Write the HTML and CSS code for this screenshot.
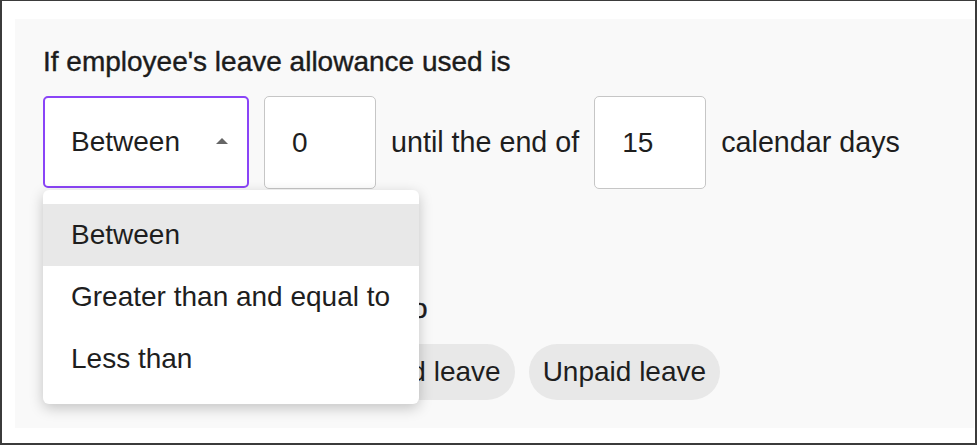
FILE: index.html
```html
<!DOCTYPE html>
<html lang="en">
<head>
    <meta charset="UTF-8">
    <meta name="viewport" content="width=device-width, initial-scale=1.0">
    <title>Leave rule</title>
    <link rel="stylesheet" href="styles.css">
  </head>
  <body>
    <div class="frame">
      <div class="panel">
        <h2 class="rule-title">If employee's leave allowance used is</h2>

        <div class="rule-row">
          <div class="select-wrap">
            <div class="select is-open">
              <span>Between</span>
              <span class="caret"></span>
            </div>
            <ul class="menu">
              <li class="menu-item selected">Between</li>
              <li class="menu-item">Greater than and equal to</li>
              <li class="menu-item">Less than</li>
            </ul>
          </div>
          <div class="num-box">0</div>
          <span class="rule-text">until the end of</span>
          <div class="num-box">15</div>
          <span class="rule-text">calendar days</span>
        </div>

        <h2 class="rule-title second">Leave types this rule applies to</h2>
        <div class="chips">
          <span class="chip">Annual leave</span>
          <span class="chip">Parental paid leave</span>
          <span class="chip">Unpaid leave</span>
        </div>
      </div>
    </div>
  </body>
</html>
```

FILE: styles.css
```css
  body {
    margin: 0;
    background: #fff;
    font-family: 'Liberation Sans', Arial, sans-serif;
    color: #1e1e1e;
  }

  .frame {
    width: 977px;
    height: 445px;
    box-sizing: border-box;
    border: 2px solid #3b3b3b;
    border-top-width: 1px;
    padding: 18px 1px 15px 13px;
    display: flex;
    flex-direction: column;
  }

  .panel {
    flex: 1;
    background: #f9f9f9;
    padding: 26px 28px 0 28px;
  }

  .rule-title {
    margin: 0;
    font-size: 28px;
    line-height: 34px;
    font-weight: normal;
    color: #1c1c1c;
    -webkit-text-stroke: 0.4px #1c1c1c;
  }

  .rule-title.second {
    margin-top: 103px;
  }

  .rule-row {
    margin-top: 17px;
    height: 93px;
    display: flex;
    align-items: center;
    gap: 15px;
    font-size: 28px;
  }

  .rule-text {
    white-space: nowrap;
    font-size: 28.7px;
  }

  .select-wrap {
    position: relative;
    height: 100%;
  }

  .select {
    width: 206px;
    height: 92px;
    box-sizing: border-box;
    background: #fff;
    border: 1px solid #c6c6c6;
    border-radius: 5px;
    padding: 0 19px 0 27px;
    display: flex;
    align-items: center;
    justify-content: space-between;
  }

  .select.is-open {
    border: 2px solid #8a44f7;
    padding-left: 26px;
  }

  .caret {
    width: 0;
    height: 0;
    border-left: 6px solid transparent;
    border-right: 6px solid transparent;
    border-bottom: 6px solid #666;
    margin-top: -2px;
  }

  .num-box {
    width: 112px;
    height: 93px;
    box-sizing: border-box;
    background: #fff;
    border: 1px solid #c6c6c6;
    border-radius: 5px;
    padding-left: 27px;
    display: flex;
    align-items: center;
  }

  .menu {
    position: absolute;
    top: 94px;
    left: 0;
    z-index: 10;
    width: 376px;
    margin: 0;
    padding: 14px 0;
    list-style: none;
    background: #fff;
    border-radius: 6px;
    box-shadow: 0 4px 14px rgba(0, 0, 0, 0.22);
  }

  .menu-item {
    height: 62px;
    padding-left: 28px;
    display: flex;
    align-items: center;
    white-space: nowrap;
  }

  .menu-item.selected {
    background: #e8e8e8;
  }

  .chips {
    margin-top: 18px;
    display: flex;
    gap: 14px;
    font-size: 28px;
  }

  .chip {
    height: 56px;
    padding: 0 14px;
    background: #e8e8e8;
    border-radius: 28px;
    display: flex;
    align-items: center;
    white-space: nowrap;
  }
```
